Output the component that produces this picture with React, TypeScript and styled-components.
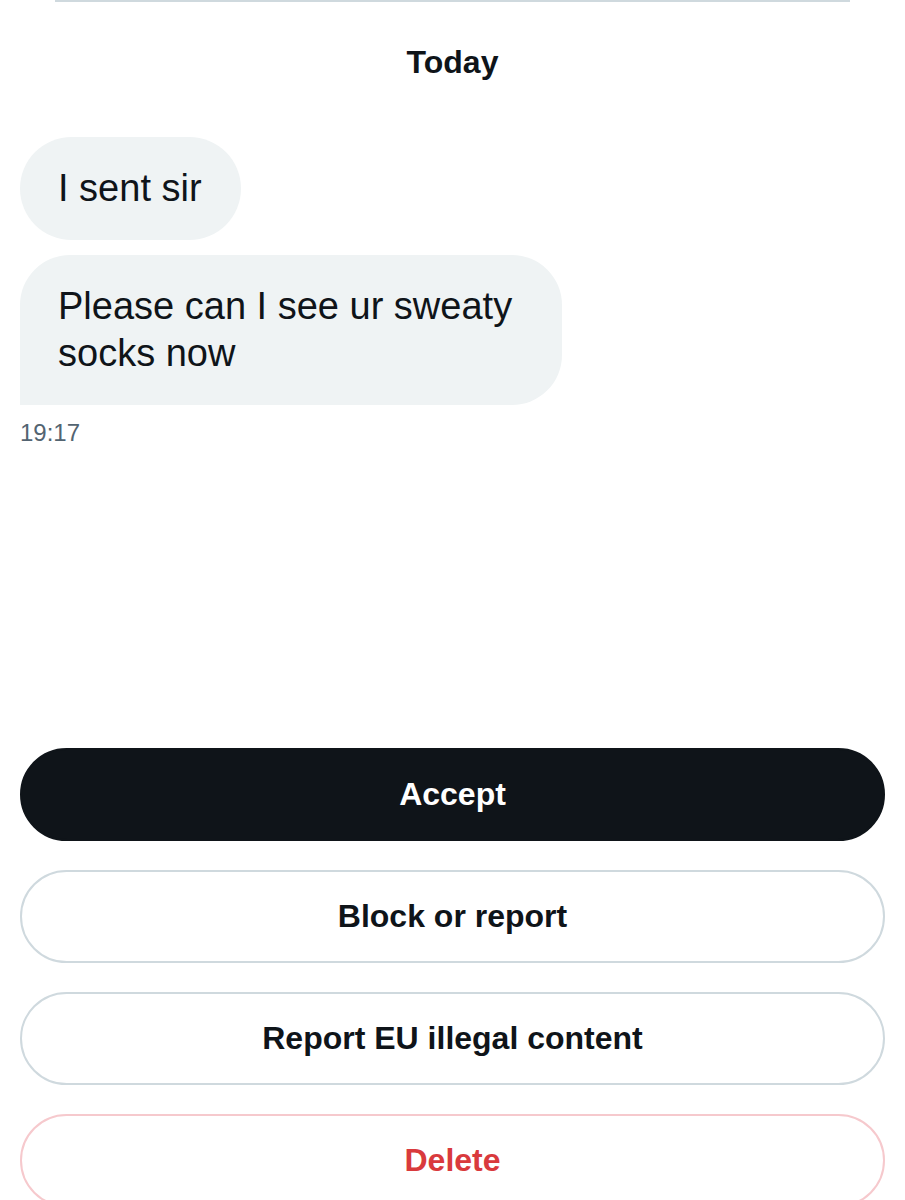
import React from 'react';
import styled, { createGlobalStyle } from 'styled-components';

const GlobalStyle = createGlobalStyle`
  html, body {
    margin: 0;
    padding: 0;
    background: #fff;
  }
  body {
    font-family: "Liberation Sans", Arial, sans-serif;
    color: #0f1419;
  }
`;

const Page = styled.div`
  width: 905px;
  min-height: 1200px;
  overflow: hidden;
  display: flex;
  flex-direction: column;
`;

const TopRule = styled.div`
  height: 2px;
  margin: 0 55px;
  background: #cfd9de;
`;

const DayLabel = styled.div`
  margin-top: 40px;
  text-align: center;
  font-size: 32px;
  line-height: 40px;
  font-weight: 700;
  color: #0f1419;
`;

const Thread = styled.div`
  margin-top: 55px;
  padding: 0 20px;
  display: flex;
  flex-direction: column;
  align-items: flex-start;
  gap: 15px;
`;

const Bubble = styled.div<{ $tail?: boolean }>`
  box-sizing: border-box;
  max-width: 542px;
  padding: 28px 39px 28px 38px;
  background: #eff3f4;
  border-radius: ${({ $tail }) => ($tail ? '50px 50px 50px 0' : '52px')};
  font-size: 38px;
  line-height: 47px;
  color: #0f1419;
`;

const Stamp = styled.div`
  margin-top: 14px;
  padding: 0 20px;
  font-size: 24px;
  line-height: 28px;
  color: #536471;
`;

const Actions = styled.div`
  margin-top: 301px;
  padding: 0 20px;
  display: flex;
  flex-direction: column;
  gap: 29px;
`;

const ActionButton = styled.button<{ $variant: 'primary' | 'outline' | 'danger' }>`
  box-sizing: border-box;
  width: 100%;
  height: 93px;
  border-radius: 47px;
  font-family: "Liberation Sans", Arial, sans-serif;
  font-size: 32px;
  font-weight: 700;
  cursor: pointer;
  background: ${({ $variant }) => ($variant === 'primary' ? '#0f1419' : '#fff')};
  color: ${({ $variant }) =>
    $variant === 'primary' ? '#fff' : $variant === 'danger' ? '#d93a3d' : '#0f1419'};
  border: 2px solid
    ${({ $variant }) =>
      $variant === 'primary' ? '#0f1419' : $variant === 'danger' ? '#f6c9cd' : '#cfd9de'};
`;

const messages = [
  { id: 1, text: 'I sent sir', tail: false },
  { id: 2, text: 'Please can I see ur sweaty socks now', tail: true },
];

export default function App() {
  return (
    <Page>
      <GlobalStyle />
      <TopRule />
      <DayLabel>Today</DayLabel>
      <Thread>
        {messages.map((m) => (
          <Bubble key={m.id} $tail={m.tail}>{m.text}</Bubble>
        ))}
      </Thread>
      <Stamp>19:17</Stamp>
      <Actions>
        <ActionButton $variant="primary">Accept</ActionButton>
        <ActionButton $variant="outline">Block or report</ActionButton>
        <ActionButton $variant="outline">Report EU illegal content</ActionButton>
        <ActionButton $variant="danger">Delete</ActionButton>
      </Actions>
    </Page>
  );
}
